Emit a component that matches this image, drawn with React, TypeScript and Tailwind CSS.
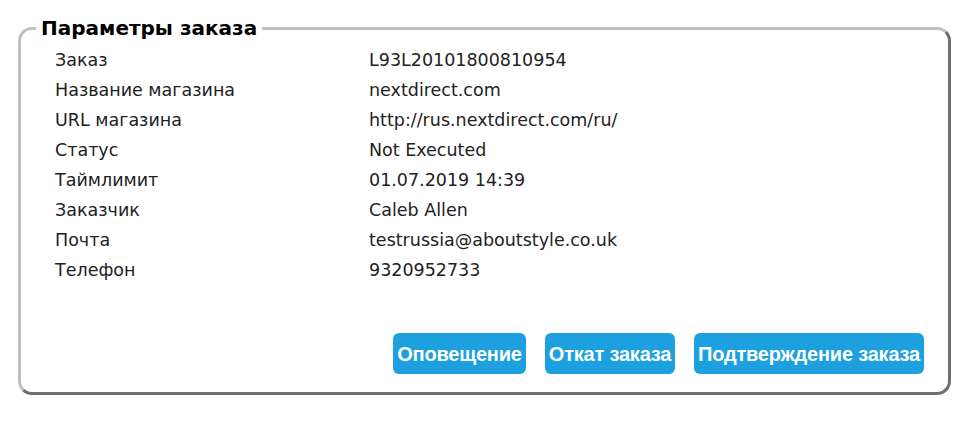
const rows: [string, string][] = [
  ["Заказ", "L93L20101800810954"],
  ["Название магазина", "nextdirect.com"],
  ["URL магазина", "http://rus.nextdirect.com/ru/"],
  ["Статус", "Not Executed"],
  ["Таймлимит", "01.07.2019 14:39"],
  ["Заказчик", "Caleb Allen"],
  ["Почта", "testrussia@aboutstyle.co.uk"],
  ["Телефон", "9320952733"],
];

const buttons = [
  { label: "Оповещение", w: "w-[133px]" },
  { label: "Откат заказа", w: "w-[130px]" },
  { label: "Подтверждение заказа", w: "w-[230px]" },
];

const App = () => {
  return (
    <div className="w-[968px] h-[428px] bg-white pl-[18px] pt-[15px] font-['DejaVu_Sans',sans-serif]">
      <fieldset className="w-[933px] h-[380px] rounded-[14px] border-[3px] border-t-[#c0c0c0] border-l-[#c0c0c0] border-r-[#6e6e6e] border-b-[#6e6e6e] pb-[18px] flex flex-col">
        <legend className="ml-[15px] px-[5px] text-[20px] font-bold leading-[26px] text-black">
          Параметры заказа
        </legend>
        <div className="pl-[34px] pr-[24px] flex-1 flex flex-col">
          <table className="text-[17.5px] text-[#222] mt-[4px]">
            <tbody>
              {rows.map(([label, value]) => (
                <tr key={label} className="h-[30px]">
                  <td className="w-[314px] align-middle">{label}</td>
                  <td className="align-middle">{value}</td>
                </tr>
              ))}
            </tbody>
          </table>
          <div className="flex-1" />
          <div className="flex justify-end gap-[19px]">
            {buttons.map((b) => (
              <button
                key={b.label}
                className={`${b.w} h-[41px] rounded-[6px] bg-[#1ca0e0] text-white font-bold text-[20px] font-['Liberation_Sans',sans-serif] tracking-[-0.2px]`}
              >
                {b.label}
              </button>
            ))}
          </div>
        </div>
      </fieldset>
    </div>
  );
};

export default App;
